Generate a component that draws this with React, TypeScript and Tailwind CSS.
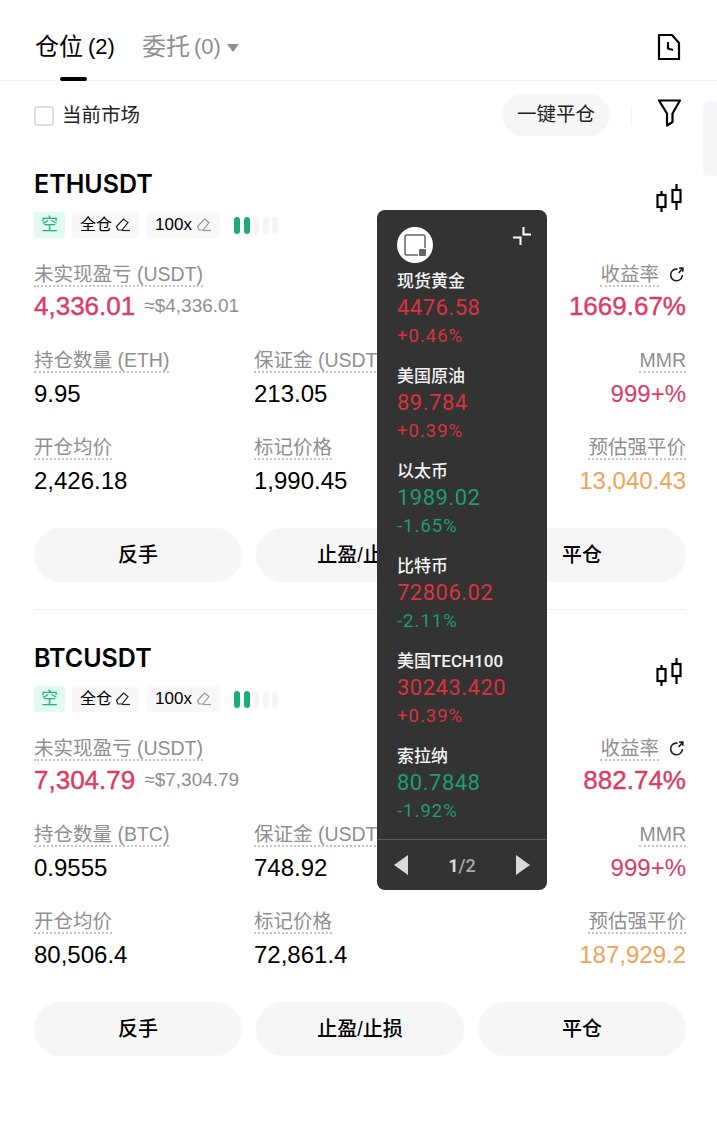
import React from "react";

const sans = "font-['Liberation_Sans','Noto_Sans_CJK_SC',sans-serif]";
const stroke = "[-webkit-text-stroke:0.4px_currentColor]";

type Position = {
  symbol: string;
  unit: string;
  pnl: string;
  pnlUsd: string;
  roe: string;
  size: string;
  margin: string;
  entry: string;
  mark: string;
  liq: string;
};

const positions: Position[] = [
  { symbol: "ETHUSDT", unit: "ETH", pnl: "4,336.01", pnlUsd: "≈$4,336.01", roe: "1669.67%", size: "9.95", margin: "213.05", entry: "2,426.18", mark: "1,990.45", liq: "13,040.43" },
  { symbol: "BTCUSDT", unit: "BTC", pnl: "7,304.79", pnlUsd: "≈$7,304.79", roe: "882.74%", size: "0.9555", margin: "748.92", entry: "80,506.4", mark: "72,861.4", liq: "187,929.2" },
];

const markets = [
  { name: "现货黄金", price: "4476.58", pct: "+0.46%", priceUp: true, pctUp: true },
  { name: "美国原油", price: "89.784", pct: "+0.39%", priceUp: true, pctUp: true },
  { name: "以太币", price: "1989.02", pct: "-1.65%", priceUp: false, pctUp: false },
  { name: "比特币", price: "72806.02", pct: "-2.11%", priceUp: true, pctUp: false },
  { name: "美国TECH100", price: "30243.420", pct: "+0.39%", priceUp: true, pctUp: true },
  { name: "索拉纳", price: "80.7848", pct: "-1.92%", priceUp: false, pctUp: false },
];

function Pencil({ className }: { className: string }) {
  return (
    <svg viewBox="0 0 16 16" className={className} fill="none" stroke="currentColor" strokeWidth="1.2">
      <path d="M1.500 9.500 8.500 2l4.500 3.500-6 7.500H3z" />
      <path d="M7 13.500H15" />
    </svg>
  );
}

function Candles() {
  return (
    <svg viewBox="0 0 26 28" className="h-[28px] w-[26px]" fill="none" stroke="#000" strokeWidth="2.200">
      <rect x="1.500" y="11" width="8" height="12" />
      <path d="M5.500 7v4M5.500 23v5" />
      <rect x="16.500" y="6" width="8" height="12" />
      <path d="M20.500 0v6M20.500 18v8" />
    </svg>
  );
}

function Label({ children }: { children: React.ReactNode }) {
  return (
    <span className="block h-[25px] w-fit border-b-2 border-dotted border-[#c4c4c4] text-[19.500px] leading-[24px] whitespace-nowrap text-[#8f8f8f]">
      {children}
    </span>
  );
}

function PositionCard({ p }: { p: Position }) {
  return (
    <section className="pr-[31px] pl-[34px]">
      <div className="flex h-[38px] items-center justify-between">
        <h2 className="font-['Inter'] text-[25px] leading-[38px] font-semibold text-black">{p.symbol}</h2>
      </div>
      <div className="relative mt-[9px] flex h-[26px] items-center">
        <span className="flex h-[26px] w-[31px] items-center justify-center rounded-[3px] bg-[#e3faf1] text-[17px] text-[#25b383]">空</span>
        <span className="ml-[7px] flex h-[26px] w-[67px] items-center justify-center gap-[3px] rounded-[3px] bg-[#f8f8f8] text-[16px] text-black">
          全仓
          <Pencil className="h-[16px] w-[16px] text-[#222]" />
        </span>
        <span className="ml-[8px] flex h-[26px] w-[73px] items-center justify-center gap-[4px] rounded-[3px] bg-[#f8f8f8] text-[17px] text-black">
          100x
          <Pencil className="h-[16px] w-[16px] text-[#999]" />
        </span>
        <span className="ml-[14px] flex gap-[3.500px]">
          <i className="h-[17px] w-[6px] rounded-full bg-[#1dab7c]" />
          <i className="h-[17px] w-[6px] rounded-full bg-[#1dab7c]" />
          <i className="h-[17px] w-[6px] rounded-full bg-[#f5f5f5]" />
          <i className="h-[17px] w-[6px] rounded-full bg-[#f5f5f5]" />
          <i className="h-[17px] w-[6px] rounded-full bg-[#f5f5f5]" />
        </span>
        <span className="absolute top-[-28px] right-[4px]">
          <Candles />
        </span>
      </div>

      <div className="mt-[24px] flex items-start justify-between">
        <div>
          <Label>未实现盈亏 (USDT)</Label>
          <div className="mt-[2px] flex h-[34px] items-center gap-[9px]">
            <span className={`text-[26px] text-[#de3a63] ${stroke}`}>{p.pnl}</span>
            <span className="text-[19px] text-[#8f8f8f]">{p.pnlUsd}</span>
          </div>
        </div>
        <div className="flex flex-col items-end">
          <div className="flex items-center gap-[9px] pr-[1px]">
            <Label>收益率</Label>
            <svg viewBox="0 0 16 16" className="h-[17px] w-[17px]" fill="none" stroke="#222" strokeWidth="1.5">
              <path d="M13.500 8.500A5.500 5.500 0 1 1 9 3" />
              <path d="M10 6.500 14 2M10.500 2H14v3.500" />
            </svg>
          </div>
          <span className={`mt-[2px] flex h-[34px] items-center text-[26px] text-[#de3a63] ${stroke}`}>{p.roe}</span>
        </div>
      </div>

      <div className="mt-[25px] grid grid-cols-[220px_1fr_auto]">
        <div>
          <Label>持仓数量 ({p.unit})</Label>
          <div className="mt-[4px] h-[34px] text-[24px] leading-[34px] text-black">{p.size}</div>
        </div>
        <div>
          <Label>保证金 (USDT)</Label>
          <div className="mt-[4px] h-[34px] text-[24px] leading-[34px] text-black">{p.margin}</div>
        </div>
        <div className="flex flex-col items-end">
          <Label>MMR</Label>
          <div className="mt-[4px] h-[34px] text-[24px] leading-[34px] text-[#de3a63]">999+%</div>
        </div>
      </div>

      <div className="mt-[24px] grid grid-cols-[220px_1fr_auto]">
        <div>
          <Label>开仓均价</Label>
          <div className="mt-[4px] h-[34px] text-[24px] leading-[34px] text-black">{p.entry}</div>
        </div>
        <div>
          <Label>标记价格</Label>
          <div className="mt-[4px] h-[34px] text-[24px] leading-[34px] text-black">{p.mark}</div>
        </div>
        <div className="flex flex-col items-end">
          <Label>预估强平价</Label>
          <div className="mt-[4px] h-[34px] text-[24px] leading-[34px] text-[#f0a15a]">{p.liq}</div>
        </div>
      </div>

      <div className="mt-[30px] flex gap-[14px]">
        {["反手", "止盈/止损", "平仓"].map((t) => (
          <button key={t} className="h-[54px] flex-1 rounded-full bg-[#f6f6f6] text-[20px] font-medium text-black">
            {t}
          </button>
        ))}
      </div>
    </section>
  );
}

function MarketWidget() {
  return (
    <aside className="absolute top-[210px] left-[377px] flex h-[680px] w-[170px] flex-col rounded-[8px] bg-[#333333] font-['Roboto','Noto_Sans_CJK_SC',sans-serif]">
      <div className="flex h-[50px] items-start justify-between pt-[17px] pr-[16px] pl-[20px]">
        <span className="flex h-[36px] w-[36px] items-center justify-center rounded-full bg-white">
          <svg viewBox="0 0 24 24" className="h-[24px] w-[24px]" fill="none">
            <path d="M15 22H3.500A1.500 1.500 0 0 1 2 20.500v-17A1.500 1.500 0 0 1 3.500 2h17A1.500 1.500 0 0 1 22 3.500V15" stroke="#666" strokeWidth="1.500" />
            <rect x="16" y="16" width="7" height="7" rx="1" fill="#666" />
          </svg>
        </span>
        <svg viewBox="0 0 18 18" className="h-[18px] w-[18px]" fill="none" stroke="#fff" strokeWidth="2">
          <path d="M10.500 0v7.500H18M0 10.500h7.500V18" />
        </svg>
      </div>
      <ul className="mt-[8px] flex flex-col gap-[2px] pl-[20px]">
        {markets.map((m) => (
          <li key={m.name} className="h-[93px]">
            <div className="h-[26px] text-[17px] leading-[26px] font-medium text-[#f2f2f2]">{m.name}</div>
            <div className={`mt-[1px] h-[26px] text-[22px] leading-[26px] tracking-[0.5px] ${m.priceUp ? "text-[#d8333f]" : "text-[#1f9d6d]"}`}>{m.price}</div>
            <div className={`mt-[2px] h-[26px] text-[18.500px] leading-[26px] tracking-[1px] ${m.pctUp ? "text-[#d8333f]" : "text-[#1f9d6d]"}`}>{m.pct}</div>
          </li>
        ))}
      </ul>
      <div className="mt-auto flex h-[51px] items-center justify-between border-t border-[#5a5a5a] px-[17px]">
        <span className="h-0 w-0 border-y-[10px] border-r-[14px] border-y-transparent border-r-[#d9d9d9]" />
        <span className="text-[18px] font-bold text-[#d9d9d9]">
          1<span className="font-medium text-[#a8a8a8]">/2</span>
        </span>
        <span className="h-0 w-0 border-y-[10px] border-l-[14px] border-y-transparent border-l-[#d9d9d9]" />
      </div>
    </aside>
  );
}

export default function App() {
  return (
    <div className={`relative h-[1123px] w-[717px] overflow-hidden bg-white ${sans}`}>
      {/* Tabs */}
      <header className="relative flex h-[81px] items-center justify-between border-b border-[#f3f3f3] pt-[13px] pr-[36px] pl-[35px]">
        <div className="flex items-center">
          <span className="flex items-center gap-[5px] text-[24px] text-black">
            仓位
            <span className="text-[22px]">(2)</span>
          </span>
          <span className="ml-[27px] flex items-center gap-[4px] text-[24px] text-[#8f8f8f]">
            委托
            <span className="text-[22px]">(0)</span>
          </span>
          <span className="mt-[2px] ml-[6px] h-0 w-0 border-x-[6.500px] border-t-[8px] border-x-transparent border-t-[#8f8f8f]" />
        </div>
        <svg viewBox="0 0 24 28" className="h-[28px] w-[24px]" fill="none" stroke="#000" strokeWidth="2.200">
          <path d="M2 2h13l7 8v16H2z" />
          <path d="M11 9v6.500l5 1.500" />
        </svg>
        <i className="absolute bottom-[-1px] left-[60px] h-[4px] w-[27px] rounded-[2px] bg-black" />
      </header>

      {/* Filter row */}
      <div className="relative flex h-[70px] items-center justify-between pr-[35px] pl-[34px]">
        <label className="flex items-center gap-[8px] text-[19.500px] text-[#222]">
          <span className="h-[20px] w-[20px] rounded-[3px] border-2 border-[#dedede]" />
          当前市场
        </label>
        <div className="flex items-center">
          <span className="mt-[-2px] flex h-[42px] w-[108px] items-center justify-center rounded-full bg-[#f6f6f6] text-[19.500px] text-[#222]">一键平仓</span>
          <i className="ml-[21px] h-[20px] w-[1px] bg-[#f3f3f3]" />
          <svg viewBox="0 0 24 28" className="mt-[-6px] ml-[26px] h-[28px] w-[24px]" fill="none" stroke="#000" strokeWidth="2.200" strokeLinejoin="round">
            <path d="M1 1.500h21l-7.500 13V23L9 26.500v-12z" />
          </svg>
        </div>
        <i className="absolute top-[20px] right-0 h-[75px] w-[14px] rounded-l-[6px] bg-[#f7f7fa]" />
      </div>

      <div className="mt-[14px]">
        <PositionCard p={positions[0]} />
        <div className="mt-[27px] mr-[31px] mb-[29px] ml-[34px] h-px bg-[#f1f1f1]" />
        <PositionCard p={positions[1]} />
      </div>

      <MarketWidget />
    </div>
  );
}
